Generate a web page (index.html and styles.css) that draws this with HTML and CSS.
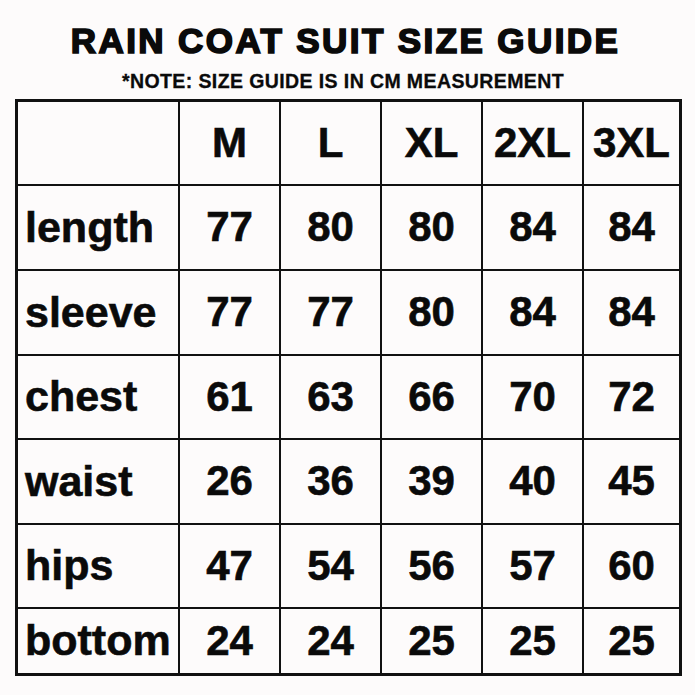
FILE: index.html
```html
<!DOCTYPE html>
<html>
<head>
<meta charset="utf-8">
<link rel="stylesheet" href="styles.css">
</head>
<body>
<div class="page">
  <h1 class="title">RAIN COAT SUIT SIZE GUIDE</h1>
  <p class="note">*NOTE: SIZE GUIDE IS IN CM MEASUREMENT</p>
  <div class="chart">
    <div class="cell head"></div>
    <div class="cell head">M</div>
    <div class="cell head">L</div>
    <div class="cell head">XL</div>
    <div class="cell head">2XL</div>
    <div class="cell head">3XL</div>

    <div class="cell label">length</div>
    <div class="cell">77</div><div class="cell">80</div><div class="cell">80</div><div class="cell">84</div><div class="cell">84</div>

    <div class="cell label">sleeve</div>
    <div class="cell">77</div><div class="cell">77</div><div class="cell">80</div><div class="cell">84</div><div class="cell">84</div>

    <div class="cell label">chest</div>
    <div class="cell">61</div><div class="cell">63</div><div class="cell">66</div><div class="cell">70</div><div class="cell">72</div>

    <div class="cell label">waist</div>
    <div class="cell">26</div><div class="cell">36</div><div class="cell">39</div><div class="cell">40</div><div class="cell">45</div>

    <div class="cell label">hips</div>
    <div class="cell">47</div><div class="cell">54</div><div class="cell">56</div><div class="cell">57</div><div class="cell">60</div>

    <div class="cell label">bottom</div>
    <div class="cell">24</div><div class="cell">24</div><div class="cell">25</div><div class="cell">25</div><div class="cell">25</div>
  </div>
</div>
</body>
</html>
```
FILE: styles.css
```css
html, body {
  margin: 0;
  padding: 0;
  background: #fdfbfb;
}
body {
  font-family: "Liberation Sans", Arial, sans-serif;
  color: #0a0a0a;
}
.page {
  width: 695px;
  height: 695px;
  padding-top: 23px;
  box-sizing: border-box;
  display: flex;
  flex-direction: column;
  align-items: center;
}
.title {
  margin: 0 0 0 -4px;
  font-size: 35px;
  line-height: 35px;
  font-weight: bold;
  letter-spacing: 2.4px;
  -webkit-text-stroke: 1.7px #0a0a0a;
  white-space: nowrap;
}
.note {
  margin: 14px 0 0 -9px;
  font-size: 19.5px;
  line-height: 19.5px;
  font-weight: bold;
  letter-spacing: 0.4px;
  -webkit-text-stroke: 0.3px #0a0a0a;
  white-space: nowrap;
}
.chart {
  align-self: flex-start;
  margin-top: 7px;
  margin-left: 15px;
  display: grid;
  grid-template-columns: 160px 99px 99px 99px 99px 95px;
  grid-template-rows: 82px 83px 83px 82px 83px 82px 64px;
  gap: 2px;
  background: #111;
  border: 3px solid #111;
}
.cell {
  background: #fdfbfb;
  display: flex;
  align-items: center;
  justify-content: center;
  font-size: 42px;
  font-weight: bold;
  -webkit-text-stroke: 0.6px #0a0a0a;
}
.cell.label {
  justify-content: flex-start;
  padding-left: 7px;
  font-size: 43px;
}
```
